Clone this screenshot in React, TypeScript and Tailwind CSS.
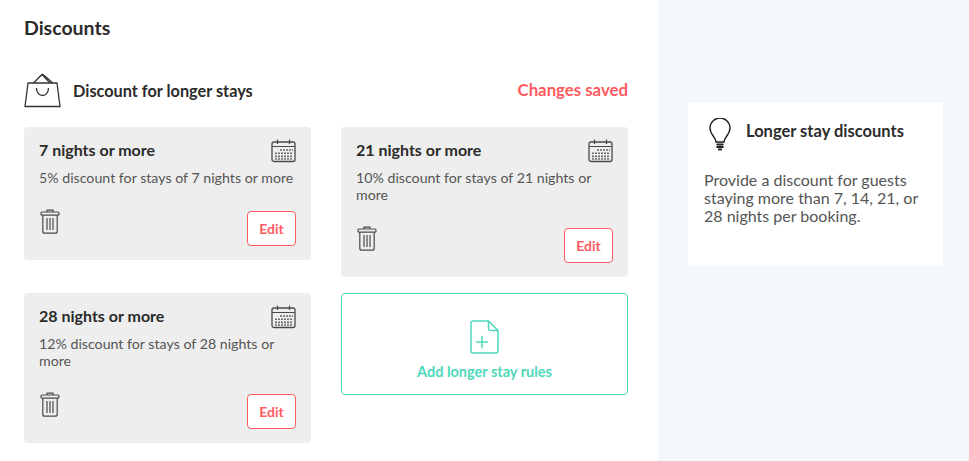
import React from 'react';

const CalendarIcon = () => (
  <svg width="26" height="24" viewBox="0 0 26 24" fill="none" className="mt-[1px] shrink-0">
    <rect x="2" y="3" width="23" height="19.5" rx="2" stroke="#4a4a4a" strokeWidth="1.3" />
    <path d="M2 7.5h23M7.5 0.5v4.5M19.5 0.5v4.5" stroke="#4a4a4a" strokeWidth="1.2" />
    <path d="M10 11h13M5 14.2h18M5 17.4h18M5 20h18" stroke="#6b6b6b" strokeWidth="1.6" strokeDasharray="2 1" />
  </svg>
);

const TrashIcon = () => (
  <svg width="20" height="25" viewBox="0 0 20 25" fill="none">
    <path d="M7 3V1.2h6V3" stroke="#4a4a4a" strokeWidth="1.2" />
    <rect x="1" y="3" width="18" height="3.2" rx="1.2" stroke="#4a4a4a" strokeWidth="1.2" />
    <path d="M2.8 6.2v16a2 2 0 0 0 2 2h10.4a2 2 0 0 0 2-2v-16" stroke="#4a4a4a" strokeWidth="1.2" />
    <path d="M7 9v12M10 9v12M13 9v12" stroke="#4a4a4a" strokeWidth="1.2" />
  </svg>
);

const BagIcon = () => (
  <svg width="37" height="35" viewBox="0 0 37 35" fill="none" className="mt-[1px] shrink-0">
    <path d="M4 10h29l3 23.5H1z" stroke="#333" strokeWidth="1.3" strokeLinejoin="round" />
    <path d="M9.5 10 18 1.5l8 8.5M15 4l4-2.5 7 6 2.5 2.5" stroke="#333" strokeWidth="1.3" />
    <path d="M12.5 15c0 10 12 10 12 0" stroke="#333" strokeWidth="1.3" />
  </svg>
);

const BulbIcon = () => (
  <svg width="22" height="33" viewBox="0 0 22 33" fill="none" className="shrink-0">
    <path d="M7 24c0-5-6-7-6-14a10 10 0 0 1 20 0c0 7-6 9-6 14z" stroke="#222" strokeWidth="1.4" />
    <path d="M7.5 26.5h7M7.5 29h7" stroke="#222" strokeWidth="1.8" />
    <path d="M9 31.5h4" stroke="#222" strokeWidth="1.8" />
  </svg>
);

const FilePlusIcon = () => (
  <svg width="29" height="34" viewBox="0 0 29 34" fill="none">
    <path d="M18.5 1H3a2 2 0 0 0-2 2v28a2 2 0 0 0 2 2h23a2 2 0 0 0 2-2V10.5z" stroke="#4fd8bb" strokeWidth="1.5" strokeLinejoin="round" />
    <path d="M18.5 1v7.5a2 2 0 0 0 2 2H28" stroke="#4fd8bb" strokeWidth="1.5" />
    <path d="M6 22h12M12 16v12" stroke="#4fd8bb" strokeWidth="1.5" />
  </svg>
);

const rules = [
  { title: '7 nights or more', text: '5% discount for stays of 7 nights or more' },
  { title: '21 nights or more', text: '10% discount for stays of 21 nights or more' },
  { title: '28 nights or more', text: '12% discount for stays of 28 nights or more' },
];

const RuleCard = ({ title, text }: { title: string; text: string }) => (
  <div className="rounded bg-[#eeeeee] pl-[15px] pr-[15px] pt-[11px] pb-[14px]">
    <div className="flex h-[25px] items-start justify-between">
      <h3 className="pt-[2px] text-[16px] leading-[20px] font-bold text-[#2b2b2b]">{title}</h3>
      <CalendarIcon />
    </div>
    <p className="mt-[6px] text-[14.2px] leading-[17px] text-[#555555]">{text}</p>
    <div className="mt-[24px] flex items-start justify-between">
      <div className="mt-[-1px] ml-[1px]"><TrashIcon /></div>
      <button className="mt-[1px] h-[35px] w-[49px] rounded border border-[#ff5a5f] bg-white text-[14px] font-bold text-[#ff5a5f]">
        Edit
      </button>
    </div>
  </div>
);

export default function App() {
  return (
    <div className="flex h-[461px] w-[969px] overflow-hidden bg-white font-['Lato','Noto_Sans',sans-serif]">
      <main className="w-[658px] shrink-0 pl-6 pr-[30px] pt-[17px]">
        <h1 className="text-[19.5px] leading-[22px] font-bold text-[#2b2b2b]">Discounts</h1>

        <div className="mt-[33px] flex h-[36px] items-center gap-3">
          <BagIcon />
          <h2 className="flex-1 pt-[1px] text-[16.3px] leading-[20px] font-bold text-[#2b2b2b]">Discount for longer stays</h2>
          <span className="text-[16.8px] font-bold text-[#ff5a5f]">Changes saved</span>
        </div>

        <div className="mt-[19px] grid grid-cols-2 items-start gap-x-[30px] gap-y-4">
          {rules.map((rule) => (
            <RuleCard key={rule.title} title={rule.title} text={rule.text} />
          ))}
          <button className="flex h-[102px] flex-col items-center rounded border border-[#4fd8bb] bg-white pt-[26px]">
            <FilePlusIcon />
            <span className="mt-[10px] text-[14.5px] leading-[16px] font-bold text-[#4fd8bb]">Add longer stay rules</span>
          </button>
        </div>
      </main>

      <aside className="flex-1 bg-[#f4f7fb] pl-[30px] pr-[26px] pt-[103px]">
        <div className="h-[163px] bg-white pl-4 pr-4 pt-[15px]">
          <div className="flex items-start gap-[15px] pl-[5px]">
            <BulbIcon />
            <h3 className="pt-[3px] text-[16.5px] leading-[20px] font-bold text-[#2b2b2b]">Longer stay discounts</h3>
          </div>
          <p className="mt-[20px] text-[16px] leading-[18px] text-[#555555]">
            Provide a discount for guests staying more than 7, 14, 21, or 28 nights per booking.
          </p>
        </div>
      </aside>
    </div>
  );
}
